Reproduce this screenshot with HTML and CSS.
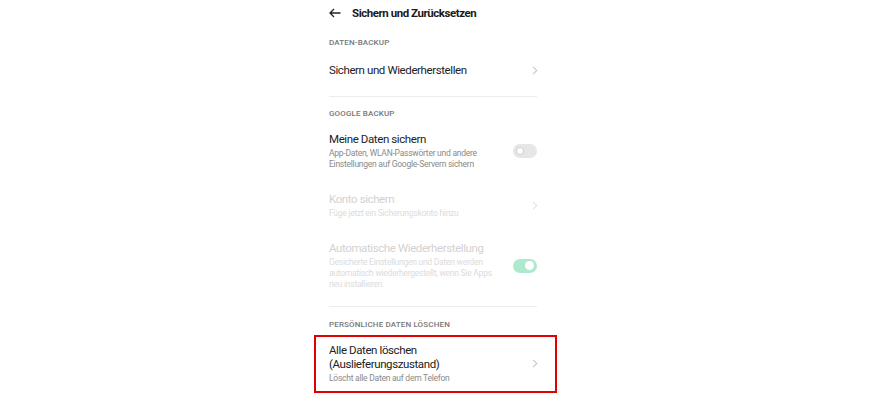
FILE: index.html
```html
<!DOCTYPE html>
<html lang="de">
<head>
  <meta charset="UTF-8" />
  <meta name="viewport" content="width=device-width, initial-scale=1.0"/>
  <title>Sichern und Zurücksetzen</title>
  <link rel="stylesheet" href="styles.css">
</head>
<body>
  <div class="screen">
    <div class="topbar">
      <svg class="back" width="12" height="10" viewBox="0 0 12 10">
        <path d="M11.5 5H1.2M5 1L1 5l4 4" fill="none" stroke="#222" stroke-width="1.3"/>
      </svg>
      <span class="title">Sichern und Zurücksetzen</span>
    </div>

    <div class="section-label">DATEN-BACKUP</div>
    <div class="row first">
      <div class="text">
        <div class="row-title">Sichern und Wiederherstellen</div>
      </div>
      <svg class="chevron" width="6" height="9" viewBox="0 0 6 9"><path d="M1 0.8l3.8 3.7L1 8.2" fill="none" stroke="#c9c9c9" stroke-width="1.1"/></svg>
    </div>
    <div class="divider"></div>

    <div class="section-label">GOOGLE BACKUP</div>
    <div class="row">
      <div class="text">
        <div class="row-title">Meine Daten sichern</div>
        <div class="row-sub">App-Daten, WLAN-Passwörter und andere<br>Einstellungen auf Google-Servern sichern</div>
      </div>
      <span class="toggle"><span class="knob"></span></span>
    </div>
    <div class="row disabled">
      <div class="text">
        <div class="row-title">Konto sichern</div>
        <div class="row-sub">Füge jetzt ein Sicherungskonto hinzu</div>
      </div>
      <svg class="chevron" width="6" height="9" viewBox="0 0 6 9"><path d="M1 0.8l3.8 3.7L1 8.2" fill="none" stroke="#e4e4e4" stroke-width="1.1"/></svg>
    </div>
    <div class="row disabled last">
      <div class="text">
        <div class="row-title">Automatische Wiederherstellung</div>
        <div class="row-sub">Gesicherte Einstellungen und Daten werden<br>automatisch wiederhergestellt, wenn Sie Apps<br>neu installieren.</div>
      </div>
      <span class="toggle on"><span class="knob"></span></span>
    </div>
    <div class="divider"></div>

    <div class="section-label third">PERSÖNLICHE DATEN LÖSCHEN</div>
    <div class="row marked">
      <div class="text">
        <div class="row-title">Alle Daten löschen<br>(Auslieferungszustand)</div>
        <div class="row-sub">Löscht alle Daten auf dem Telefon</div>
      </div>
      <svg class="chevron" width="6" height="9" viewBox="0 0 6 9"><path d="M1 0.8l3.8 3.7L1 8.2" fill="none" stroke="#c9c9c9" stroke-width="1.1"/></svg>
    </div>
  </div>
</body>
</html>
```

FILE: styles.css
```css
* {
  box-sizing: border-box;
}

body {
  margin: 0;
  background: #fff;
  font-family: Roboto, "Noto Sans", sans-serif;
  color: #222;
}

.screen {
  width: 243px;
  margin-left: 314px;
  padding: 0 20px 0 15px;
}

.topbar {
  height: 26px;
  display: flex;
  align-items: center;
}

.back {
  margin-right: 11px;
}

.title {
  font-size: 11.5px;
  font-weight: 700;
  letter-spacing: -0.45px;
  color: #1a1a1a;
}

.section-label {
  margin-top: 7px;
  height: 20px;
  line-height: 20px;
  font-size: 8px;
  font-weight: 500;
  color: #777;
  letter-spacing: 0.15px;
}

.section-label.third {
  margin-top: 8px;
}

.row {
  display: flex;
  align-items: center;
  justify-content: space-between;
  padding: 8px 0 14px;
}

.row.first {
  height: 43px;
  padding: 10px 0 19px;
}

.row.last {
  padding-bottom: 16px;
}

.row-title {
  font-size: 11.5px;
  line-height: 14px;
  letter-spacing: -0.4px;
  color: #222;
}

.row-sub {
  margin-top: 2px;
  font-size: 8.5px;
  line-height: 11px;
  letter-spacing: -0.25px;
  color: #8a8a8a;
}

.disabled .row-title {
  color: #d2d2d2;
}

.disabled .row-sub {
  color: #dcdcdc;
}

.chevron {
  flex-shrink: 0;
  margin-right: -1px;
}

.divider {
  height: 1px;
  background: #ececec;
}

.toggle {
  position: relative;
  flex-shrink: 0;
  width: 24px;
  height: 14px;
  border-radius: 7px;
  background: #e6e6e6;
}

.toggle .knob {
  position: absolute;
  left: 3px;
  top: 3px;
  width: 8px;
  height: 8px;
  border-radius: 50%;
  background: #fff;
  border: 1.5px solid #cfcfcf;
}

.toggle.on {
  background: #ade9cf;
}

.toggle.on .knob {
  left: 12px;
  top: 2.5px;
  width: 9px;
  height: 9px;
  border: none;
}

.row.marked {
  margin: 0 -20px 0 -15px;
  padding: 6px 18px 7px 13px;
  border: 2px solid #e00000;
}
```
